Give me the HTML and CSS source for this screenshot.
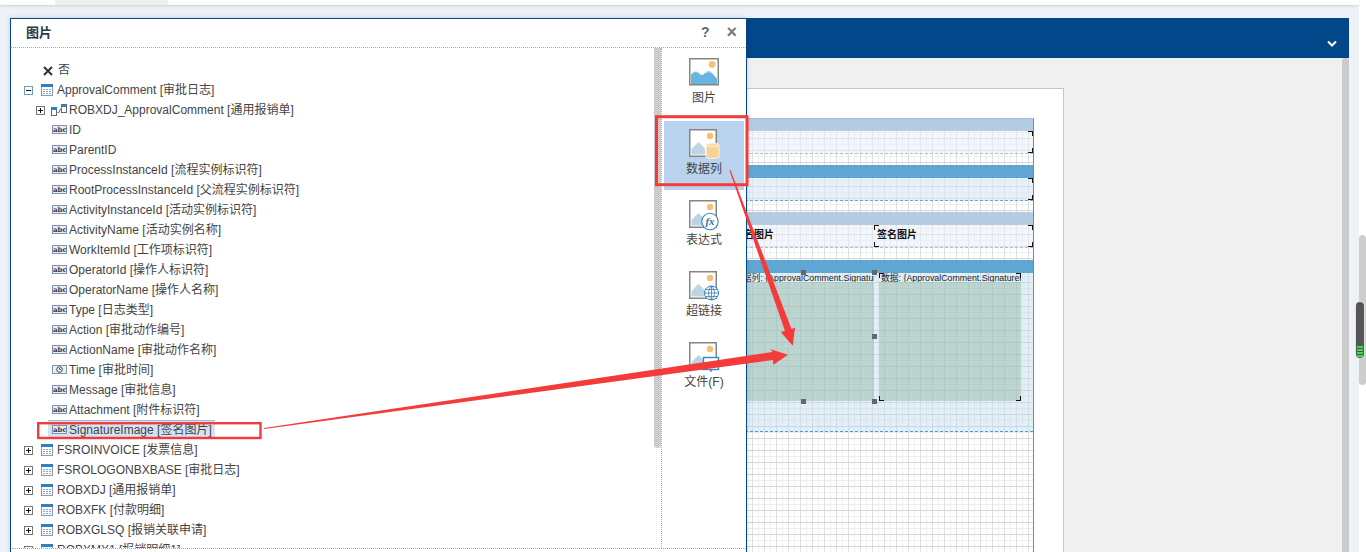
FILE: index.html
```html
<!DOCTYPE html>
<html lang="zh">
<head>
<meta charset="utf-8">
<title>图片</title>
<link rel="stylesheet" href="styles.css">
</head>
<body>
<svg class="defs" width="0" height="0" aria-hidden="true">
  <symbol id="i-table" viewBox="0 0 12 12">
    <rect x=".5" y=".5" width="11" height="11" fill="#fff" stroke="#8a9bb0"/>
    <rect x="0" y="0" width="12" height="3" fill="#2f80bd"/>
    <path d="M2 5h2v1H2zM5 5h2v1H5zM8 5h2v1H8zM2 7h2v1H2zM5 7h2v1H5zM8 7h2v1H8zM2 9h2v1H2zM5 9h2v1H5zM8 9h2v1H8z" fill="#8fa6c0"/>
  </symbol>
  <symbol id="i-rel" viewBox="0 0 16 12">
    <rect x=".5" y="3.500" width="5" height="8" fill="#fff" stroke="#667"/>
    <rect x="0" y="3" width="6" height="3" fill="#2f80bd"/>
    <rect x="10.500" y=".5" width="5" height="8" fill="#fff" stroke="#667"/>
    <rect x="10" y="0" width="6" height="3" fill="#2f80bd"/>
    <path d="M6.500 8.500h1.500l1-3h1" fill="none" stroke="#667"/>
  </symbol>
  <symbol id="i-frame" viewBox="0 0 30 30">
    <rect x=".75" y=".75" width="26.500" height="26.500" fill="#fff" stroke="#858585" stroke-width="1.500"/>
    <circle cx="21" cy="7" r="3.200" fill="#f8c074"/>
    <path d="M2.500 25.500V20l7-7 6.500 6.500v6z" fill="#bdd3e6"/>
  </symbol>
</svg>

<div class="page">
  <div class="main">
    <div class="topbar"><div class="toptab"></div></div>
    <div class="bluebar">
      <svg class="chevron" width="10" height="7" viewBox="0 0 10 7"><path d="M1 1.500l4 4 4-4" fill="none" stroke="#fff" stroke-width="2"/></svg>
    </div>
    <div class="workspace">
      <div class="canvas">
        <div class="paper">
          <div class="surface">
            <div class="band band-pale"></div>
            <div class="sect sect-pale"><i class="cn tr"></i><i class="cn br"></i></div>
            <div class="gap"></div>
            <div class="band band-strong"></div>
            <div class="sect sect-strong"><i class="cn tr"></i><i class="cn br"></i></div>
            <div class="gap"></div>
            <div class="band band-pale"></div>
            <div class="sect sect-pale sect-cols">
              <div class="lbl">签名图片</div>
              <div class="lbl lbl-r">签名图片<i class="cn tl"></i><i class="cn bl"></i></div>
              <i class="cn tr"></i><i class="cn br"></i>
            </div>
            <div class="gap gap-12"></div>
            <div class="band band-strong"></div>
            <div class="detail">
              <div class="data-col">
                <div class="data-text">数据列: {ApprovalComment.SignatureImage}</div>
                <div class="data-fill"></div>
                <b class="hd h1"></b><b class="hd h2"></b><b class="hd h3"></b><b class="hd h4"></b><b class="hd h5"></b>
              </div>
              <div class="data-col data-col-r">
                <div class="data-text">数据: {ApprovalComment.SignatureImage}</div>
                <div class="data-fill"></div>
                <i class="cn tl"></i><i class="cn tr"></i><i class="cn bl"></i><i class="cn br"></i>
              </div>
            </div>
          </div>
        </div>
      </div>
      <div class="vbar"></div>
    </div>
  </div>
  <div class="side">
    <div class="side-track"><div class="side-thumb"><div class="side-grip"></div></div></div>
  </div>
</div>

<section class="dialog">
  <header class="dlg-head">
    <h1 class="dlg-title">图片</h1>
    <div class="dlg-actions"><span class="dlg-help">?</span><span class="dlg-close">×</span></div>
  </header>
  <div class="dlg-body">
    <div class="tree">
      <div class="row l0 no"><svg class="x-mark" viewBox="0 0 10 10"><path d="M1 1l8 8M9 1l-8 8" fill="none" stroke="#333" stroke-width="2"/></svg><span>否</span></div>
      <div class="row l0"><span class="exp minus"></span><svg class="ic12"><use href="#i-table"/></svg><span>ApprovalComment [审批日志]</span></div>
      <div class="row l1"><span class="exp plus"></span><svg class="ic16"><use href="#i-rel"/></svg><span>ROBXDJ_ApprovalComment [通用报销单]</span></div>
      <div class="row leaf"><span class="abc">abc</span><span class="latin">ID</span></div>
      <div class="row leaf"><span class="abc">abc</span><span class="latin">ParentID</span></div>
      <div class="row leaf"><span class="abc">abc</span><span>ProcessInstanceId [流程实例标识符]</span></div>
      <div class="row leaf"><span class="abc">abc</span><span>RootProcessInstanceId [父流程实例标识符]</span></div>
      <div class="row leaf"><span class="abc">abc</span><span>ActivityInstanceId [活动实例标识符]</span></div>
      <div class="row leaf"><span class="abc">abc</span><span>ActivityName [活动实例名称]</span></div>
      <div class="row leaf"><span class="abc">abc</span><span>WorkItemId [工作项标识符]</span></div>
      <div class="row leaf"><span class="abc">abc</span><span>OperatorId [操作人标识符]</span></div>
      <div class="row leaf"><span class="abc">abc</span><span>OperatorName [操作人名称]</span></div>
      <div class="row leaf"><span class="abc">abc</span><span>Type [日志类型]</span></div>
      <div class="row leaf"><span class="abc">abc</span><span>Action [审批动作编号]</span></div>
      <div class="row leaf"><span class="abc">abc</span><span>ActionName [审批动作名称]</span></div>
      <div class="row leaf"><span class="abc abc-time"><svg width="9" height="7" viewBox="0 0 9 7"><circle cx="4.500" cy="3.500" r="2.800" fill="none" stroke="#444"/><path d="M4.500 2v1.500H6" fill="none" stroke="#444" stroke-width=".8"/></svg></span><span>Time [审批时间]</span></div>
      <div class="row leaf"><span class="abc">abc</span><span>Message [审批信息]</span></div>
      <div class="row leaf"><span class="abc">abc</span><span>Attachment [附件标识符]</span></div>
      <div class="row leaf selected"><span class="abc">abc</span><span>SignatureImage [签名图片]</span></div>
      <div class="row l0"><span class="exp plus"></span><svg class="ic12"><use href="#i-table"/></svg><span>FSROINVOICE [发票信息]</span></div>
      <div class="row l0"><span class="exp plus"></span><svg class="ic12"><use href="#i-table"/></svg><span>FSROLOGONBXBASE [审批日志]</span></div>
      <div class="row l0"><span class="exp plus"></span><svg class="ic12"><use href="#i-table"/></svg><span>ROBXDJ [通用报销单]</span></div>
      <div class="row l0"><span class="exp plus"></span><svg class="ic12"><use href="#i-table"/></svg><span>ROBXFK [付款明细]</span></div>
      <div class="row l0"><span class="exp plus"></span><svg class="ic12"><use href="#i-table"/></svg><span>ROBXGLSQ [报销关联申请]</span></div>
      <div class="row l0"><span class="exp plus"></span><svg class="ic12"><use href="#i-table"/></svg><span>ROBXMX1 [报销明细1]</span></div>
    </div>
    <div class="tree-bar-col"><div class="tree-bar"></div></div>
    <nav class="kinds">
      <div class="kind">
        <svg class="kind-ic" viewBox="0 0 30 30">
          <rect x=".75" y=".75" width="28.500" height="26" fill="#fff" stroke="#858585" stroke-width="1.500"/>
          <circle cx="23" cy="6.500" r="3.400" fill="#f8c074"/>
          <path d="M2 26V17c3-4 6-4 9-1 2 2 3 1 5-1 3-3 6-2 8 1 2 3 4 4 4 5v5z" fill="#66b5e0"/>
          <path d="M2 16c3-3 6-3 9 0M16 15c3-2 6-1 8 1" fill="none" stroke="#c6e3f3" stroke-width="1"/>
        </svg>
        <span>图片</span>
      </div>
      <div class="kind active">
        <svg class="kind-ic" viewBox="0 0 30 30">
          <use href="#i-frame" width="30" height="30"/>
          <path d="M17 16c0-1.800 13-1.800 13 0v12c0 1.800-13 1.800-13 0z" fill="#f8d08f" stroke="#fff" stroke-width=".8"/>
          <ellipse cx="23.500" cy="16" rx="6.300" ry="1.900" fill="#fbdca8" stroke="#fff" stroke-width=".6"/>
        </svg>
        <span>数据列</span>
      </div>
      <div class="kind">
        <svg class="kind-ic" viewBox="0 0 30 30">
          <use href="#i-frame" width="30" height="30"/>
          <circle cx="21" cy="21.500" r="8.200" fill="#fff" stroke="#3a87c0" stroke-width="1.100"/>
          <text x="21" y="25" class="fx">fx</text>
        </svg>
        <span>表达式</span>
      </div>
      <div class="kind">
        <svg class="kind-ic" viewBox="0 0 30 30">
          <use href="#i-frame" width="30" height="30"/>
          <circle cx="22.500" cy="22" r="7" fill="#fff" stroke="#3a7fb5" stroke-width="1"/>
          <path d="M15.500 22h14M16.500 18.500h12M16.500 25.500h12M22.500 15v14M22.500 15c-4 4-4 10 0 14M22.500 15c4 4 4 10 0 14" fill="none" stroke="#3a7fb5" stroke-width=".8"/>
        </svg>
        <span>超链接</span>
      </div>
      <div class="kind">
        <svg class="kind-ic" viewBox="0 0 30 30">
          <use href="#i-frame" width="30" height="30"/>
          <rect x="14.500" y="15.500" width="15" height="12" fill="#fff" stroke="#3a87c0" stroke-width="1.400"/>
          <path d="M22 27v3" stroke="#3a87c0" stroke-width="1.400"/>
        </svg>
        <span>文件(F)</span>
      </div>
    </nav>
  </div>
</section>

<svg class="notes" width="1366" height="552" viewBox="0 0 1366 552">
  <rect x="38.200" y="423.200" width="222.300" height="14.800" fill="none" stroke="#f53a3a" stroke-width="2.400"/>
  <rect x="656.500" y="116.700" width="90.500" height="68" fill="none" stroke="#f53a3a" stroke-width="3"/>
  <path d="M264 428L772.500 352 770.700 349.300 788 354.700 773.300 364.700 773 360 264 429z" fill="#f53a3a"/>
  <path d="M729.500 170.500L785 331 780.700 332 792.700 345.700 795 327.700 791.500 329 730.500 170z" fill="#f53a3a"/>
</svg>
</body>
</html>
```

FILE: styles.css
```css
* { box-sizing: border-box; }
html, body { margin: 0; height: 552px; overflow: hidden; }
body {
  position: relative;
  background: #fff;
  font-family: "Liberation Sans", "Noto Sans CJK SC", sans-serif;
  font-size: 12px;
  color: #444;
}
.defs { position: absolute; }

.page { display: flex; height: 552px; }
.main {
  width: 1359px;
  display: flex;
  flex-direction: column;
  background: #eef2f6;
}
.topbar {
  height: 5px;
  margin-bottom: 13px;
  background: #fff;
  box-shadow: 0 1px 3px rgba(0, 0, 0, .14);
}
.toptab { width: 113px; height: 5px; margin-left: 55px; background: #f0f0f0; }
.bluebar {
  height: 40px;
  margin: 0 10px;
  background: #03478b;
  display: flex;
  justify-content: flex-end;
  align-items: flex-end;
  padding: 0 12px 11px 0;
}
.chevron { display: block; }
.workspace { flex: 1; min-height: 0; display: flex; margin: 0 10px; background: #f0f0f0; }
.canvas { flex: 1; min-width: 0; padding-top: 30px; overflow: hidden; }
.vbar { width: 7px; background: #cbcbcb; border-radius: 3px 3px 0 0; }

.paper {
  width: 394px;
  height: 470px;
  margin-left: 660px;
  padding: 29px 29px 0 30px;
  background: #fff;
  border-top: 1px solid #c6c6c6;
  border-right: 1px solid #c6c6c6;
}
.surface {
  height: 440px;
  border-top: 1px solid #a5bbd0;
  border-right: 1px solid #868686;
  background-color: #fff;
  background-image:
    linear-gradient(#d6d6d6 1px, transparent 1px),
    linear-gradient(90deg, #dfdfdf 1px, transparent 1px),
    linear-gradient(#efefef 1px, transparent 1px),
    linear-gradient(90deg, #f0f0f0 1px, transparent 1px);
  background-size: 12px 12px, 12px 12px, 6px 6px, 6px 6px;
  background-position: 0 7px, 4px 0, 0 1px, 4px 0;
}
.band { height: 13px; }
.band-pale { background: rgba(176, 200, 224, .92); }
.band-strong { background: rgba(90, 162, 210, .96); }
.band:first-child { height: 12px; }
.sect { position: relative; height: 23px; }
.sect-pale { background: rgba(232, 238, 248, .5); border-bottom: 1px dashed #a9c0da; }
.sect-strong { background: rgba(214, 230, 246, .55); border-bottom: 1px dashed #6ba4d1; }
.gap { height: 11px; }
.gap-12 { height: 12px; }

.sect-cols { display: grid; grid-template-columns: 151px 155px; padding-left: 23px; }
.lbl {
  position: relative;
  padding-left: 11px;
  font-size: 10px;
  font-weight: 700;
  line-height: 19px;
  color: #111;
  white-space: nowrap;
}
.lbl-r { padding-left: 3px; }

.cn { position: absolute; width: 5px; height: 5px; border: 0 solid #111; }
.tr { top: 0; right: 0; border-width: 1px 1px 0 0; }
.br { bottom: 0; right: 0; border-width: 0 1px 1px 0; }
.tl { top: 0; left: 0; border-width: 1px 0 0 1px; }
.bl { bottom: 0; left: 0; border-width: 0 0 1px 1px; }

.detail {
  display: grid;
  grid-template-columns: 151px 142px;
  column-gap: 5px;
  height: 159px;
  padding-left: 23px;
  background: rgba(190, 219, 238, .45);
  border-bottom: 1px dashed #4f97cd;
}
.data-col { position: relative; height: 128px; }
.data-text {
  height: 9px;
  padding-left: 11px;
  overflow: hidden;
  font-size: 8.8px;
  line-height: 11px;
  white-space: nowrap;
  color: #222;
}
.data-col-r .data-text { padding-left: 2px; }
.data-fill { height: 119px; background: rgba(125, 165, 140, .36); }
.hd { position: absolute; width: 5px; height: 5px; background: #666; }
.h1 { left: 78px; top: -3px; }
.h2 { left: 149px; top: -3px; }
.h3 { left: 149px; top: 61px; }
.h4 { left: 78px; top: 126px; }
.h5 { left: 149px; top: 126px; }

.side { width: 7px; padding-top: 235px; }
.side-track {
  position: relative;
  height: 150px;
  background: #cdcdcd;
  border-radius: 4px;
}
.side-thumb {
  position: absolute;
  left: -3px;
  top: 67px;
  width: 8px;
  height: 56px;
  display: flex;
  align-items: flex-end;
  justify-content: center;
  padding-bottom: 1px;
  background: #555;
  border-radius: 4px;
  box-shadow: 0 0 0 1px #e4e4e4;
}
.side-grip {
  width: 6px;
  height: 11px;
  background: repeating-linear-gradient(#33dd4f 0 2px, #555 2px 3px);
}

.dialog {
  position: absolute;
  left: 10px;
  top: 18px;
  width: 737px;
  height: 540px;
  background: #fff;
  border: 1px solid #03478b;
  box-shadow: 0 0 5px rgba(0, 0, 0, .16);
}
.dlg-head {
  height: 29px;
  display: flex;
  align-items: center;
  justify-content: space-between;
  padding: 0 0 3px 15px;
  border-bottom: 1px dotted #aaa;
}
.dlg-title { margin: 0; font-size: 13px; font-weight: 700; color: #2a3a4a; }
.dlg-actions { display: flex; align-items: center; width: 36px; margin-right: 9px; justify-content: space-between; }
.dlg-help { font-size: 14px; font-weight: 700; color: #666; }
.dlg-close { font-size: 18px; font-weight: 700; line-height: 14px; color: #777; }

.dlg-body { display: flex; height: 501px; border-bottom: 1px dotted #aaa; margin-left: 1px; }
.tree {
  width: 642px;
  padding: 10px 0 0 12px;
  overflow: hidden;
}
.row {
  display: flex;
  align-items: center;
  height: 20px;
  white-space: nowrap;
}
.row svg { flex: none; }
.latin { padding-top: 4px; }
.l0 .exp { margin: 4px 8px 0 0; }
.l0 svg { margin: 3px 4px 0 0; }
.no { padding-left: 19px; }
.row .x-mark { width: 10px; height: 10px; margin: 5px 5px 0 0; }
.l1 { padding-left: 12px; }
.l1 .exp { margin: 4px 6px 0 0; }
.l1 svg { margin: 3px 2px 0 0; }
.leaf { padding-left: 24px; }
.leaf .abc { margin: 2px 2px 0 4px; }
.ic12 { width: 12px; height: 12px; }
.ic16 { width: 16px; height: 12px; }
.exp {
  position: relative;
  flex: none;
  width: 9px;
  height: 9px;
  background: #fff;
  border: 1px solid #6f9fc0;
}
.exp::before { content: ""; position: absolute; left: 1px; top: 3px; width: 5px; height: 1px; background: #111; }
.plus::after { content: ""; position: absolute; left: 3px; top: 1px; width: 1px; height: 5px; background: #111; }
.plus { border-color: #777; }
.abc {
  flex: none;
  width: 15px;
  height: 9px;
  border: 1px solid #8095ad;
  background: #e9eef4;
  font-family: "DejaVu Serif", serif;
  font-size: 7px;
  font-weight: 700;
  line-height: 7px;
  text-align: center;
  color: #334;
}
.abc-time { display: flex; align-items: center; justify-content: center; }
.selected > * { position: relative; }
.selected { position: relative; }
.selected::before {
  content: "";
  position: absolute;
  left: 24px;
  top: 2px;
  width: 167px;
  height: 17px;
  background: #d3e3f4;
  border-top: 1px solid #9fb8d4;
}

.tree-bar-col { width: 8px; border-right: 1px dotted #aaa; }
.tree-bar { width: 7px; height: 400px; background: #cbcbcb; border-radius: 0 0 4px 4px; }
.kinds { flex: 1; padding-top: 2px; }
.kind {
  width: 80px;
  height: 69px;
  margin: 0 0 2px 2px;
  padding-top: 8px;
  display: flex;
  flex-direction: column;
  align-items: center;
  text-align: center;
  color: #444;
}
.kind.active { background: #b9d3ee; }
.kind-ic { display: block; width: 30px; height: 30px; margin: 0 0 1px 0; overflow: visible; }
.kind span { line-height: 18px; }
.fx { font-family: "Liberation Serif", serif; font-style: italic; font-size: 11px; font-weight: 700; fill: #3a6f9f; text-anchor: middle; }

.notes { position: absolute; left: 0; top: 0; pointer-events: none; }
```
